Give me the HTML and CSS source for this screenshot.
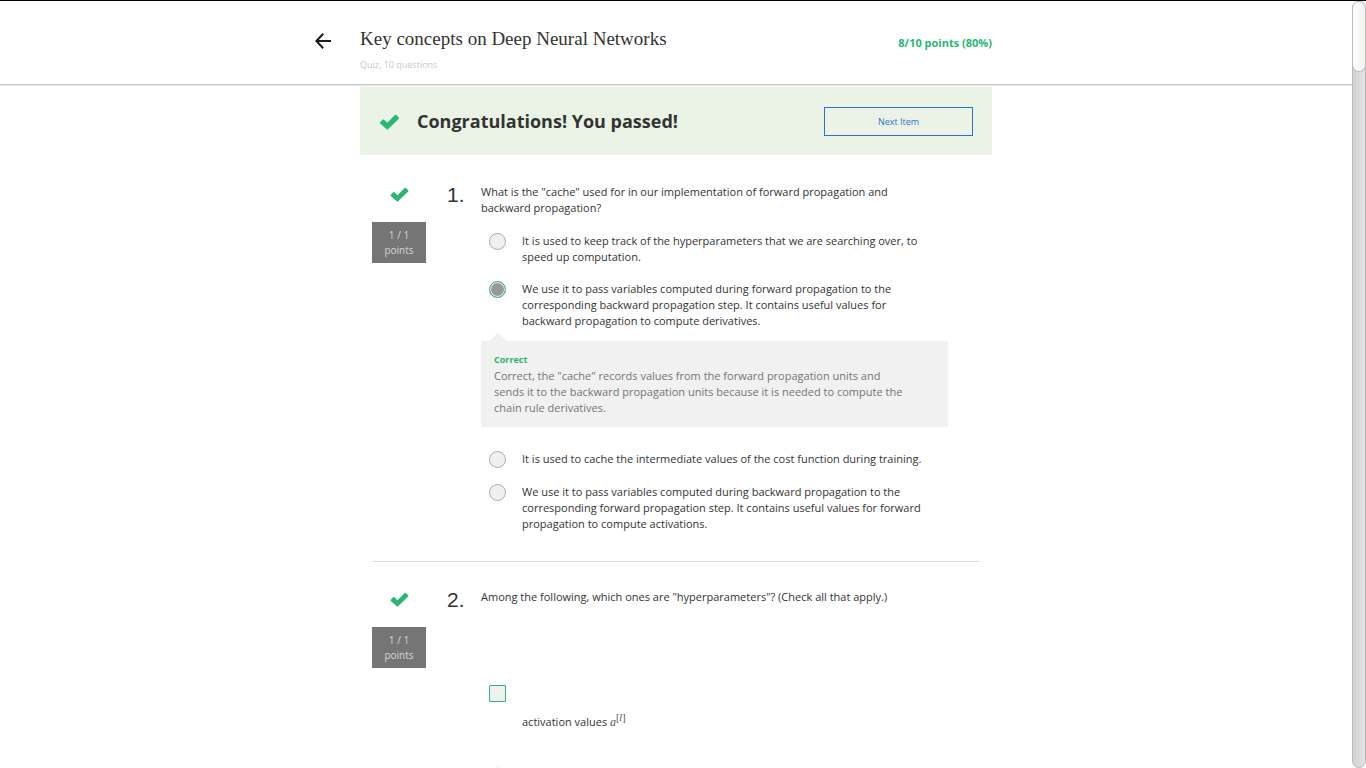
FILE: index.html
```html
<!DOCTYPE html>
<html lang="en">
<head>
<meta charset="utf-8">
<meta name="viewport" content="width=device-width, initial-scale=1">
<title>Key concepts on Deep Neural Networks</title>
<link rel="stylesheet" href="styles.css">
</head>
<body>
<svg class="symbols" aria-hidden="true">
  <symbol id="check" viewBox="0 0 20 16">
    <path d="M0.7 8.3 L3.2 5.7 Q3.9 5.1 4.6 5.7 L7.8 8.7 L15.4 1 Q16.1 0.4 16.8 1 L19.3 3.4 Q19.9 4.1 19.3 4.8 L8.5 15.2 Q7.8 15.8 7.1 15.2 L0.7 9.6 Q0.1 9 0.7 8.3 Z" fill="#2ab673"/>
  </symbol>
</svg>
<div class="page">
  <header class="header">
    <div class="header-inner">
      <button class="back" type="button" aria-label="Back">
        <svg width="16" height="16" viewBox="0 0 16 16" fill="none" stroke="#1b1b1b" stroke-width="2"><path d="M8.2 0.8 L1.4 8 L8.2 15.2 M1.4 8 H16"/></svg>
      </button>
      <div class="heading">
        <h1 class="title">Key concepts on Deep Neural Networks</h1>
        <p class="subtitle">Quiz, 10 questions</p>
      </div>
      <p class="score">8/10 points (80%)</p>
    </div>
  </header>
  <main class="quiz">
    <section class="banner">
      <svg class="banner-check" aria-hidden="true"><use href="#check"/></svg>
      <h2 class="banner-title">Congratulations! You passed!</h2>
      <button class="next" type="button">Next Item</button>
    </section>

    <section class="question">
      <div class="mark">
        <svg class="mark-check" aria-hidden="true"><use href="#check"/></svg>
        <p class="points">1 / 1<br>points</p>
      </div>
      <div class="number">1.</div>
      <div class="body">
        <p class="prompt">What is the "cache" used for in our implementation of forward propagation and backward propagation?</p>
        <div class="option">
          <input class="choice radio" type="radio" name="q1" id="q1a">
          <label for="q1a">It is used to keep track of the hyperparameters that we are searching over, to speed up computation.</label>
        </div>
        <div class="option">
          <input class="choice radio" type="radio" name="q1" id="q1b" checked>
          <label for="q1b">We use it to pass variables computed during forward propagation to the corresponding backward propagation step. It contains useful values for backward propagation to compute derivatives.</label>
        </div>
        <div class="feedback">
          <p class="verdict">Correct</p>
          <p>Correct, the "cache" records values from the forward propagation units and sends it to the backward propagation units because it is needed to compute the chain rule derivatives.</p>
        </div>
        <div class="option">
          <input class="choice radio" type="radio" name="q1" id="q1c">
          <label for="q1c">It is used to cache the intermediate values of the cost function during training.</label>
        </div>
        <div class="option">
          <input class="choice radio" type="radio" name="q1" id="q1d">
          <label for="q1d">We use it to pass variables computed during backward propagation to the corresponding forward propagation step. It contains useful values for forward propagation to compute activations.</label>
        </div>
      </div>
    </section>

    <section class="question">
      <div class="mark">
        <svg class="mark-check" aria-hidden="true"><use href="#check"/></svg>
        <p class="points">1 / 1<br>points</p>
      </div>
      <div class="number">2.</div>
      <div class="body">
        <p class="prompt">Among the following, which ones are "hyperparameters"? (Check all that apply.)</p>
        <div class="option option-math">
          <input class="choice" type="checkbox" id="q2a">
          <label for="q2a">activation values <span class="math">a<sup>[<i>l</i>]</sup></span></label>
        </div>
        <div class="feedback feedback-math"></div>
      </div>
    </section>
  </main>
</div>
<div class="scrollbar" aria-hidden="true"><div class="thumb"></div></div>
</body>
</html>
```
FILE: styles.css
```css
* { box-sizing: border-box; }
body {
  display: flex;
  height: 100vh;
  margin: 0;
  overflow: hidden;
  border-top: 1px solid #000;
  background: #fff;
  color: #333;
  font: 11px/16px "Open Sans", sans-serif;
}
h1, h2, p { margin: 0; }
button { padding: 0; background: none; font: inherit; }
.symbols { display: none; }
.page { flex: 1; min-width: 0; overflow: hidden; }

.header {
  border-bottom: 1px solid #c9c9c9;
  box-shadow: 0 1px 1px #e6e6e6;
}
.header-inner, .quiz {
  width: 100%;
  max-width: 632px;
  margin: 0 auto;
}
.header-inner {
  display: flex;
  max-width: 722px;
  padding: 24px 45px 11px 0;
}
.back { display: flex; width: 16px; height: 32px; align-items: center; margin-right: 29px; border: 0; }
.heading { flex: 1; }
.title { font: 400 19px/28px "Liberation Serif", serif; }
.subtitle { margin-top: 4px; color: #c8c8c8; font-size: 9px; }
.score { padding-top: 10px; color: #2ab673; font-weight: 700; }

.quiz { padding-top: 2px; }
.banner {
  display: flex;
  align-items: center;
  padding: 20px 19px 19px;
  background: #eaf3e6;
}
.banner-check { width: 21px; height: 16px; }
.banner-title { flex: 1; margin-left: 17px; padding-bottom: 2px; font-size: 18px; line-height: 24px; }
.next {
  width: 149px;
  height: 29px;
  border: 1px solid #2a73cc;
  color: #2a73cc;
  font-size: 9px;
}

.question {
  display: grid;
  grid-template-columns: 75px 34px 1fr;
  margin: 0 12px;
  padding: 29px 0;
}
.question + .question { padding-top: 27px; border-top: 1px solid #ddd; }
.mark { display: flex; flex-direction: column; align-items: center; width: 54px; padding-top: 3px; }
.mark-check { width: 19px; height: 15px; }
.points {
  width: 100%;
  margin-top: 20px;
  padding: 6px 0 5px;
  background: #757575;
  color: #d6d6d6;
  font-size: 10px;
  line-height: 15px;
  text-align: center;
}
.number { font: 21px/22px "Liberation Sans", sans-serif; }
.body { padding-right: 32px; }
.prompt { padding-right: 8px; }
.option { display: flex; gap: 16px; margin-top: 16px; padding: 0 16px 0 8px; }
.prompt + .option { margin-top: 17px; }
.choice {
  flex: none;
  width: 17px;
  height: 17px;
  margin: 0;
  appearance: none;
  border: 1px solid #2ab673;
  border-radius: 1px;
  background: #f0f0f0;
}
.radio { border-color: #aaa; border-radius: 50%; }
.radio:checked {
  border-color: #2ab673;
  background: #999;
  box-shadow: inset 0 0 0 1px #e8f3ee;
}
.feedback {
  position: relative;
  margin: 12px 0 24px;
  padding: 11px 40px 11px 13px;
  background: #f1f1f1;
  color: #757575;
}
.feedback::before {
  content: "";
  position: absolute;
  left: 8px;
  bottom: 100%;
  border: solid transparent;
  border-width: 0 9px 8px;
  border-bottom-color: #f1f1f1;
}
.verdict { color: #2ab673; font-size: 9px; font-weight: 700; }
.prompt + .option-math { margin-top: 80px; }
.option-math label { padding-top: 29px; }
.math { color: #555; font: italic 12px/1 "Liberation Serif", serif; }
.math sup { font-size: 10px; font-style: normal; line-height: 0; }
.feedback-math { margin-top: 44px; }

.scrollbar {
  width: 14px;
  border: 1px solid #bbb;
  border-radius: 7px;
  background: linear-gradient(90deg, #d2d2d2, #e3e3e3);
}
.thumb {
  height: 9vh;
  border-radius: 7px;
  box-shadow: 0 0 0 1px #bbb;
  background: linear-gradient(90deg, #fff, #f2f1f0);
}
```
